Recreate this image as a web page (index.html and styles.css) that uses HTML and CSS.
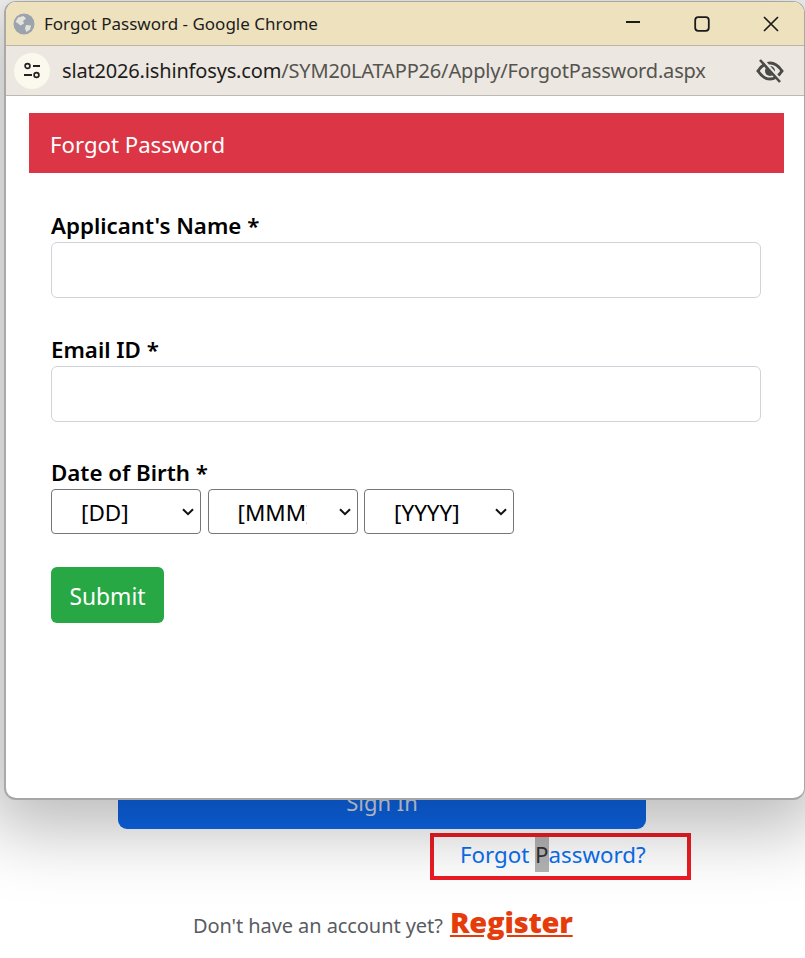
FILE: index.html
```html
<!DOCTYPE html>
<html lang="en">
<head>
<meta charset="utf-8">
<title>Forgot Password</title>
<link rel="stylesheet" href="styles.css">
</head>
<body>
<div class="desk">
  <main class="login">
    <button class="signin" type="button">Sign In</button>
    <div class="forgot-row">
      <a class="forgot" href="#">Forgot <span class="sel">P</span>assword?</a>
    </div>
    <p class="register-line">Don't have an account yet? <a class="register" href="#">Register</a></p>
  </main>

  <section class="window">
    <header class="titlebar">
      <svg class="globe" viewBox="0 0 22 22" width="22" height="22">
        <circle cx="11" cy="11" r="10.5" fill="#9ba3ad"/>
        <path d="M5 4.5 L10.5 3 L13 5.5 L10 8 L11 10.5 L7.5 12.5 L4.5 10 L2.5 9 Z M13 12 L18 12.5 L17 16.5 L13.5 19 L12 15.5 Z" fill="#e6e3dc"/>
      </svg>
      <span class="title">Forgot Password - Google Chrome</span>
      <div class="controls">
        <svg viewBox="0 0 16 16" width="16" height="16"><path d="M1 6H15" stroke="#1b1b1b" stroke-width="1.8" fill="none"/></svg>
        <svg viewBox="0 0 16 16" width="16" height="16"><rect x="1.2" y="1.2" width="13.6" height="13.6" rx="3" stroke="#1b1b1b" stroke-width="1.8" fill="none"/></svg>
        <svg viewBox="0 0 16 16" width="16" height="16"><path d="M1 1L15 15M15 1L1 15" stroke="#1b1b1b" stroke-width="1.7" fill="none"/></svg>
      </div>
    </header>
    <div class="addressbar">
      <span class="tune">
        <svg viewBox="0 0 18 18" width="18" height="18">
          <circle cx="4.5" cy="4" r="2.4" stroke="#222" stroke-width="1.7" fill="none"/>
          <path d="M10 4H17M1 13H9" stroke="#222" stroke-width="1.8" fill="none"/>
          <circle cx="13.5" cy="13" r="2.4" stroke="#222" stroke-width="1.7" fill="none"/>
        </svg>
      </span>
      <span class="url"><span class="host">slat2026.ishinfosys.com</span>/SYM20LATAPP26/Apply/ForgotPassword.aspx</span>
      <svg class="eye" viewBox="0 0 28 24" width="28" height="24">
        <path d="M2 12C6 6 10 4 14 4s8 2 12 8c-4 6-8 8-12 8S6 18 2 12Z" stroke="#4a4a48" stroke-width="3" fill="none"/>
        <circle cx="14" cy="12" r="5" fill="#4a4a48"/>
        <path d="M7 1L26 23" stroke="#ece7e1" stroke-width="3" fill="none"/>
        <path d="M4 1L24 23" stroke="#4a4a48" stroke-width="2.6" fill="none"/>
      </svg>
    </div>
    <div class="content">
      <h1 class="card-head">Forgot Password</h1>
      <form class="form">
        <div class="field">
          <label class="label" for="name">Applicant's Name *</label>
          <input class="input" id="name" type="text">
        </div>
        <div class="field">
          <label class="label" for="email">Email ID *</label>
          <input class="input" id="email" type="text">
        </div>
        <div class="field dob">
          <label class="label" for="dd">Date of Birth *</label>
          <div class="selects">
            <select class="select" id="dd"><option>[DD]</option></select>
            <select class="select" aria-label="Month"><option>[MMM]</option></select>
            <select class="select" aria-label="Year"><option>[YYYY]</option></select>
          </div>
        </div>
        <button class="submit" type="button">Submit</button>
      </form>
    </div>
  </section>
</div>
</body>
</html>
```

FILE: styles.css
```css
* { box-sizing: border-box; }
html, body { margin: 0; padding: 0; background: #fff; }
body { font-family: "Noto Sans", "Open Sans", sans-serif; }

.desk {
  position: relative;
  width: 805px;
  height: 958px;
  overflow: hidden;
  background: #fff;
}

.login {
  display: flex;
  flex-direction: column;
  padding: 769px 0 0 118px;
  height: 100%;
}
.signin {
  width: 528px;
  height: 60px;
  border: 0;
  border-radius: 0 0 9px 9px;
  background: #0d66ea;
  color: #d5deec;
  font: 22px "Noto Sans", sans-serif;
  padding: 6px 0 0;
}
.forgot-row { margin: 4px 0 0 312px; }
.forgot {
  display: block;
  width: 261px;
  height: 47px;
  border: 4px solid #ec1c24;
  color: #0b6ff0;
  font-size: 22.3px;
  line-height: 36px;
  padding-left: 26px;
  text-decoration: none;
  white-space: nowrap;
}
.sel { background: #b4b4b4; color: #333; padding: 2px 0; }
.register-line {
  margin: 22px 0 0 75px;
  font-size: 20px;
  line-height: 34px;
  color: #595c5f;
  letter-spacing: -0.08px;
}
.register {
  color: #e63c0c;
  font: 800 29px "Open Sans", sans-serif;
  text-decoration: underline;
  letter-spacing: -0.2px;
  margin-left: 2px;
}

.window {
  position: absolute;
  left: 4px;
  top: 1px;
  width: 801px;
  height: 799px;
  background: #fff;
  border: 1px solid #a9a7a2;
  border-left: 2px solid #aaa9a6;
  border-bottom: 2px solid #a6a6a6;
  border-radius: 12px;
  overflow: hidden;
  box-shadow: 0 12px 70px 18px rgba(0, 0, 0, .27);
}

.titlebar {
  display: flex;
  align-items: center;
  height: 44px;
  background: #eee2be;
  border-bottom: 1px solid #b8b4a6;
  padding: 0 0 0 7px;
}
.globe { flex: none; }
.title {
  margin-left: 9px;
  font-size: 17px;
  color: #1c1c1c;
  white-space: nowrap;
}
.controls {
  display: flex;
  gap: 53px;
  margin-left: auto;
  padding-right: 25px;
  align-items: center;
}

.addressbar {
  display: flex;
  align-items: center;
  height: 50px;
  background: #ece7e1;
  border-bottom: 1px solid #bdb9b2;
  padding: 0 0 0 8px;
}
.tune {
  flex: none;
  display: flex;
  align-items: center;
  justify-content: center;
  width: 36px;
  height: 36px;
  border-radius: 50%;
  background: #fbf8ee;
}
.url {
  margin-left: 12px;
  font-size: 20px;
  color: #55544f;
  white-space: nowrap;
  letter-spacing: -0.165px;
}
.host { color: #1d1d1b; }
.eye { margin-left: auto; margin-right: 20px; flex: none; }

.content { padding: 17px 20px 0 23px; background: #fff; }
.card-head {
  margin: 0;
  height: 60px;
  background: #dc3545;
  color: #fff;
  font-size: 22.2px;
  font-weight: 400;
  line-height: 63px;
  padding-left: 21px;
}

.form { padding: 36px 23px 0 22px; }
.field { margin-bottom: 35px; }
.label {
  display: block;
  font-size: 22.3px;
  font-weight: 600;
  line-height: 33px;
  color: #000;
}
.input {
  display: block;
  width: 100%;
  height: 56px;
  border: 1px solid #ced4da;
  border-radius: 6px;
  background: #fff;
}
.dob { margin-bottom: 33px; }
.dob .label { line-height: 32px; }
.selects { display: flex; gap: 6.5px; }
.select {
  appearance: none;
  width: 150px;
  height: 45px;
  border: 1px solid #767676;
  border-radius: 4px;
  background: #fff url("data:image/svg+xml,%3Csvg xmlns='http://www.w3.org/2000/svg' width='12' height='8' viewBox='0 0 12 8'%3E%3Cpath d='M1 1.2l5 5 5-5' fill='none' stroke='%23111' stroke-width='2'/%3E%3C/svg%3E") no-repeat right 6px center;
  color: #000;
  font: 22.5px "Noto Sans", sans-serif;
  padding: 2px 50px 0 29px;
}
.submit {
  display: block;
  width: 113px;
  height: 56px;
  border: 0;
  border-radius: 6px;
  background: #28a745;
  color: #fff;
  font: 22.8px "Noto Sans", sans-serif;
  padding: 2px 0 0;
}
```
